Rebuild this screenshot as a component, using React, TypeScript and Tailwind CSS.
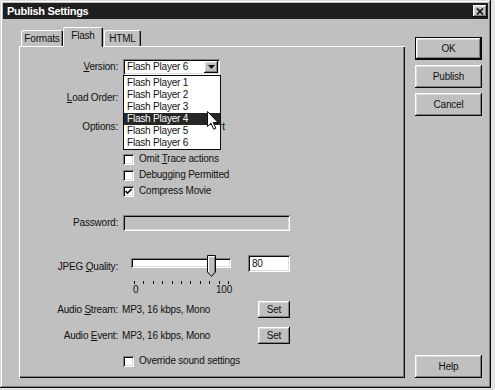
import React from "react";

const raised =
  "shadow-[inset_-1px_-1px_#0a0a0a,inset_1px_1px_#ffffff,inset_-2px_-2px_#808080,inset_2px_2px_#dcdcdc]";
const sunken =
  "shadow-[inset_1px_1px_#808080,inset_-1px_-1px_#ffffff,inset_2px_2px_#0a0a0a,inset_-2px_-2px_#dcdcdc]";

function U({ children }: { children: React.ReactNode }) {
  return <span className="underline underline-offset-[1px] decoration-[1px]">{children}</span>;
}

function Checkbox({ checked = false }: { checked?: boolean }) {
  return (
    <div className={`w-[11px] h-[11px] bg-white ${sunken} flex items-center justify-center shrink-0`}>
      {checked && (
        <svg width="7" height="7" viewBox="0 0 7 7">
          <path d="M0.5 3 L2.5 5 L6.5 1" stroke="#111" strokeWidth="1.6" fill="none" />
        </svg>
      )}
    </div>
  );
}

function CheckRow({ children, checked }: { children?: React.ReactNode; checked?: boolean }) {
  return (
    <div className="flex items-center h-[16px]">
      <div className="w-[99px]" />
      <div className="ml-[5px] flex items-center gap-[5px]">
        <Checkbox checked={checked} />
        {children && <span className="whitespace-nowrap">{children}</span>}
      </div>
    </div>
  );
}

function Select({ value }: { value?: string }) {
  return (
    <div className={`w-[97px] h-[16px] bg-white ${sunken} relative flex items-center pl-[4px]`}>
      {value && <span className="whitespace-nowrap">{value}</span>}
      <div className={`absolute right-[2px] top-[2px] w-[14px] h-[12px] bg-[#c0c0c0] ${raised} flex items-center justify-center`}>
        <svg width="7" height="4" viewBox="0 0 7 4">
          <path d="M0 0 H7 L3.5 4 Z" fill="#111" />
        </svg>
      </div>
    </div>
  );
}

function Btn({ children, def = false, className = "" }: { children: React.ReactNode; def?: boolean; className?: string }) {
  return (
    <div className={`${def ? "border border-[#0a0a0a]" : ""} ${className}`}>
      <div className={`w-full h-full bg-[#c0c0c0] ${raised} flex items-center justify-center`}>{children}</div>
    </div>
  );
}

export default function App() {
  const ticks = Array.from({ length: 11 });
  const items = ["Flash Player 1", "Flash Player 2", "Flash Player 3", "Flash Player 4", "Flash Player 5", "Flash Player 6"];
  return (
    <div className="w-[495px] h-[390px] bg-[#e4e4e4] font-['Liberation_Sans',Arial,sans-serif] text-[10px] leading-[12px] tracking-[-0.2px] text-[#111]">
      <div className="w-[491px] h-[388px] bg-[#c0c0c0] p-[3px] shadow-[inset_-1px_-1px_#0a0a0a,inset_1px_1px_#dcdcdc,inset_-2px_-2px_#808080,inset_2px_2px_#ffffff] flex flex-col">
        {/* Title bar */}
        <div className="h-[16px] bg-[#1e1e1e] flex items-center justify-between pl-[4px] pr-[1px]">
          <span className="text-white font-bold text-[11px] tracking-[-0.3px]">Publish Settings</span>
          <div className={`w-[14px] h-[12px] bg-[#c0c0c0] ${raised} flex items-center justify-center`}>
            <svg width="8" height="7" viewBox="0 0 8 7">
              <path d="M1 0.5 L7 6.5 M7 0.5 L1 6.5" stroke="#111" strokeWidth="1.7" />
            </svg>
          </div>
        </div>

        {/* Body */}
        <div className="flex">
          {/* Left: tabs + panel */}
          <div className="ml-[16px] pt-[8px]">
            <div className="flex items-end h-[19px] pl-[2px]">
              <div className="w-[42px] h-[16px] rounded-tl-[2px] rounded-tr-[2px] shadow-[inset_1px_1px_#ffffff,inset_-1px_0_#0a0a0a,inset_-2px_0_#808080] flex items-center justify-center pt-[2px]">
                Formats
              </div>
              <div className="relative z-10 w-[40px] h-[20px] -mb-[1px] bg-[#c0c0c0] rounded-tl-[2px] rounded-tr-[2px] shadow-[inset_1px_1px_#ffffff,inset_-1px_0_#0a0a0a,inset_-2px_0_#808080] flex items-start justify-center pt-[3px]">
                Flash
              </div>
              <div className="ml-[1px] w-[37px] h-[16px] rounded-tl-[2px] rounded-tr-[2px] shadow-[inset_1px_1px_#ffffff,inset_-1px_0_#0a0a0a,inset_-2px_0_#808080] flex items-center justify-center pt-[2px]">
                HTML
              </div>
            </div>

            <div className="relative w-[386px] h-[332px] shadow-[inset_1px_1px_#ffffff,inset_-1px_-1px_#0a0a0a,inset_-2px_-2px_#808080] flex flex-col pt-[13px]">
              {/* Version */}
              <div className="flex items-center h-[16px]">
                <div className="w-[99px] text-right"><U>V</U>ersion:</div>
                <div className="ml-[5px]"><Select value="Flash Player 6" /></div>
              </div>
              {/* Load order */}
              <div className="flex items-center h-[16px] mt-[15px]">
                <div className="w-[99px] text-right"><U>L</U>oad Order:</div>
                <div className="ml-[5px]"><Select /></div>
              </div>
              {/* Options */}
              <div className="mt-[13px] flex flex-col">
                <div className="flex items-center h-[16px]">
                  <div className="w-[99px] text-right">Options:</div>
                  <div className="ml-[5px] flex items-center gap-[5px]">
                    <Checkbox />
                    <span className="whitespace-nowrap pl-[80px]">rt</span>
                  </div>
                </div>
                <CheckRow />
                <CheckRow>Omit <U>T</U>race actions</CheckRow>
                <CheckRow>Debugging Permitted</CheckRow>
                <CheckRow checked>Compress Movie</CheckRow>
              </div>
              {/* Password */}
              <div className="flex items-center h-[16px] mt-[16px]">
                <div className="w-[99px] text-right">Password:</div>
                <div className={`ml-[5px] w-[167px] h-[16px] bg-[#c0c0c0] ${sunken}`} />
              </div>
              {/* JPEG quality */}
              <div className="flex items-start mt-[24px]">
                <div className="w-[99px] text-right mt-[6px]">JPEG <U>Q</U>uality:</div>
                <div className="ml-[5px] w-[125px] flex flex-col">
                  <div className="relative h-[22px]">
                    <div className={`ml-[8px] mt-[3px] w-[100px] h-[10px] bg-white ${sunken}`} />
                    <svg className="absolute left-[84px] top-0" width="9" height="22" viewBox="0 0 9 22">
                      <path d="M0.5 0.5 H8.5 V17 L4.5 21.5 L0.5 17 Z" fill="#c0c0c0" stroke="#0a0a0a" />
                      <path d="M1.5 1.5 H7.5 M1.5 1.5 V17" stroke="#ffffff" />
                      <path d="M7.5 2 V17 L4.5 20.3" stroke="#808080" fill="none" />
                    </svg>
                  </div>
                  <div className="mt-[4px] ml-[11px] w-[95px] h-[3px] flex justify-between">
                    {ticks.map((_, i) => (
                      <div key={i} className="w-[1px] h-[3px] bg-[#111]" />
                    ))}
                  </div>
                  <div className="relative h-[10px] leading-[10px]">
                    <span className="absolute left-[10px] top-[1px]">0</span>
                    <span className="absolute left-[93px] top-[1px]">100</span>
                  </div>
                </div>
                <div className={`w-[42px] h-[17px] bg-white ${sunken} flex items-center pl-[4px]`}>80</div>
              </div>
              {/* Audio stream */}
              <div className="flex items-center h-[17px] mt-[7px]">
                <div className="w-[99px] text-right">Audio <U>S</U>tream:</div>
                <div className="ml-[4px] w-[136px] whitespace-nowrap">MP3, 16 kbps, Mono</div>
                <Btn className="w-[32px] h-[17px]">Set</Btn>
              </div>
              {/* Audio event */}
              <div className="flex items-center h-[17px] mt-[9px]">
                <div className="w-[99px] text-right">Audio <U>E</U>vent:</div>
                <div className="ml-[4px] w-[136px] whitespace-nowrap">MP3, 16 kbps, Mono</div>
                <Btn className="w-[32px] h-[17px]">Set</Btn>
              </div>
              {/* Override */}
              <div className="mt-[9px]">
                <CheckRow>Override sound settings</CheckRow>
              </div>

              {/* Dropdown list overlay */}
              <div className="absolute left-[104px] top-[29px] w-[98px] h-[75px] bg-white border border-[#0a0a0a] z-20 pt-[1px]">
                {items.map((it, i) => (
                  <div
                    key={it}
                    className={`h-[12px] leading-[12px] pl-[3px] whitespace-nowrap ${i === 3 ? "bg-[#262626] text-white" : ""}`}
                  >
                    {it}
                  </div>
                ))}
              </div>
              {/* Mouse cursor */}
              <svg className="absolute left-[188px] top-[65px] z-30" width="12" height="19" viewBox="0 0 12 19">
                <path d="M0.5 0.5 V15.5 L4 12.2 L6.6 18.2 L8.8 17.3 L6.3 11.5 H11 Z" fill="#ffffff" stroke="#0a0a0a" strokeWidth="1" />
              </svg>
            </div>
          </div>

          {/* Right: buttons */}
          <div className="ml-[10px] w-[67px] h-[359px] pt-[18px] flex flex-col gap-[5px]">
            <Btn def className="h-[23px]">OK</Btn>
            <Btn className="h-[23px]">Publish</Btn>
            <Btn className="h-[23px]">Cancel</Btn>
            <Btn className="h-[23px] mt-auto">Help</Btn>
          </div>
        </div>
      </div>
    </div>
  );
}
